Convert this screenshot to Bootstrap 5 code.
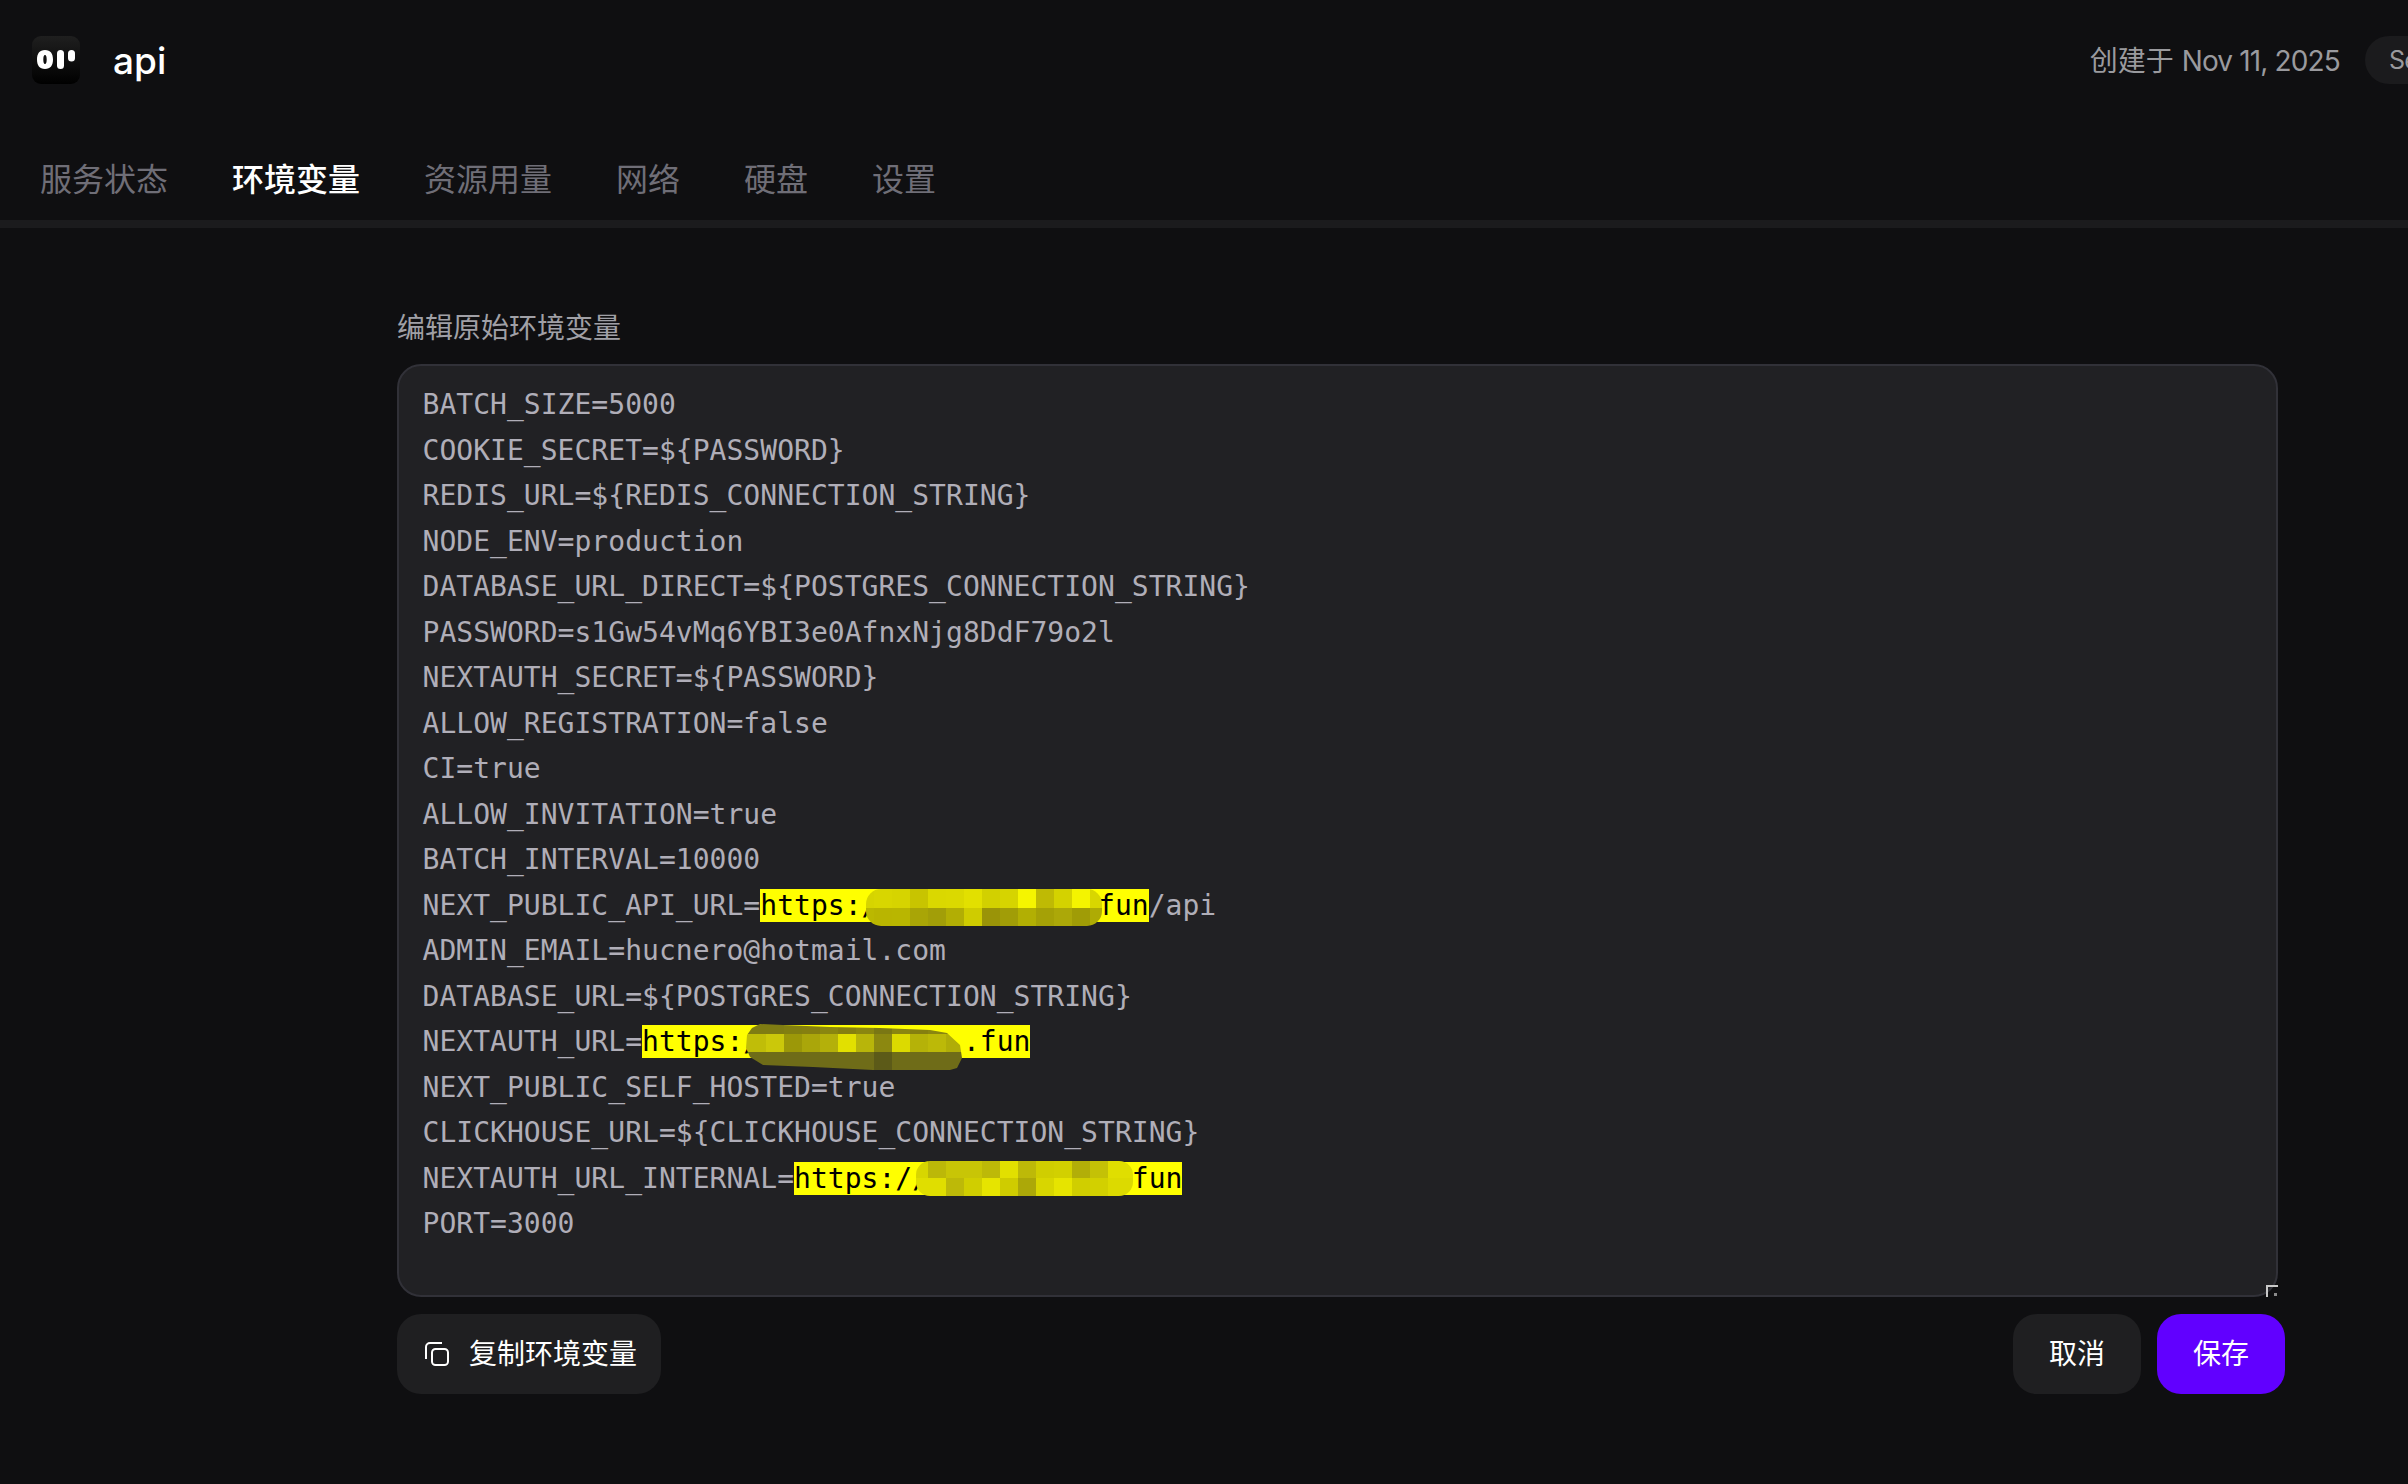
<!doctype html>
<html lang="zh"><head><meta charset="utf-8">
<link href="https://cdn.jsdelivr.net/npm/bootstrap@5.3.0/dist/css/bootstrap.min.css" rel="stylesheet">
<style>
html,body{background:#0f0f11;height:1484px;overflow:hidden}
body{font-family:"Inter","Noto Sans CJK SC",sans-serif;color:#fff}
.top-bar{height:120px;padding:36px 0 0 32px}
.logo-box{width:48px;height:48px;border-radius:9px;background:linear-gradient(#1f1f1f,#000)}
.app-name{font-size:37px;line-height:50px;margin-left:33px;font-weight:500}
.created{font-size:28px;line-height:50px;color:#9a9a9e;margin-right:25px}
.created span{letter-spacing:-.85px}
.chip{width:200px;height:48px;border-radius:24px 0 0 24px;background:#1b1b1d;color:#9a9a9e;font-size:25px;line-height:48px;padding-left:24px;margin-right:-157px;flex:none;letter-spacing:-.8px}
.tabbar{height:108px;padding-left:40px;gap:64px;border-bottom:8px solid #1b1b1d}
.tab-item{font-size:32px;line-height:48px;margin-top:36px;color:#6f6e77;padding:0;height:48px}
.tab-item.on{color:#fff;font-weight:500}
.pane{padding:0 123px 0 397px}
.field-label{font-size:28px;line-height:40px;color:#a0a0a6;margin:80px 0 16px}
.env-box{width:1881px;height:933px;background:#212124;border:2.5px solid #313138;border-radius:24px;padding:16px 24px 0 23.5px;position:relative;font-family:"DejaVu Sans Mono",monospace;font-size:28px;line-height:45.5px;letter-spacing:.03px;color:#b0aeb8;white-space:pre}
.hl{background:#ff0;color:#000;position:relative;display:inline-block;line-height:33px;height:33px}
.patch-a,.patch-b,.patch-c{position:absolute;display:block}
.patch-a{left:106px;top:0}
.patch-b{left:104px;top:-1px}
.patch-c{left:122px;top:-1px}
.grip{position:absolute;right:-1.5px;bottom:-1.5px;width:12px;height:12px;border-left:2px solid #c8c8c8;border-top:2px solid #c8c8c8}
.grip::after{content:"";position:absolute;right:1px;bottom:1px;width:3px;height:3px;background:#8a8a8a}
.act-row{margin-top:17px}
.act-btn{height:80px;border-radius:24px;background:#1f1f21;color:#fff;font-size:28px;border:0;padding:0 24px 0 28px;display:inline-flex;align-items:center;gap:20px}
.act-btn.wide{width:128px;justify-content:center;padding:0}
.act-btn.go{background:#6100ff}
.act-btn svg{width:24px;height:24px;flex:none}
</style></head><body>
<div class="top-bar d-flex align-items-start justify-content-between overflow-hidden">
 <div class="d-flex">
  <div class="logo-box d-flex align-items-center justify-content-center">
   <svg width="48" height="48" viewBox="0 0 48 48" fill="#fff"><path fill-rule="evenodd" d="M13 14c5.500 0 8 3.800 8 9.500S18.500 33 13 33s-8-3.800-8-9.500S7.500 14 13 14zm0 5c-1.200 0-1.700 2-1.700 4.500S11.800 28 13 28s1.700-2 1.700-4.500S14.200 19 13 19z"/><rect x="25" y="14" width="7" height="19" rx="3.500"/><rect x="36" y="14" width="7" height="11.500" rx="3.500"/></svg>
  </div>
  <div class="app-name">api</div>
 </div>
 <div class="d-flex">
  <div class="created">创建于 <span>Nov 11, 2025</span></div>
  <div class="chip">Self-hosted</div>
 </div>
</div>
<div class="tabbar d-flex">
 <a class="tab-item text-decoration-none">服务状态</a>
 <a class="tab-item on text-decoration-none">环境变量</a>
 <a class="tab-item text-decoration-none">资源用量</a>
 <a class="tab-item text-decoration-none">网络</a>
 <a class="tab-item text-decoration-none">硬盘</a>
 <a class="tab-item text-decoration-none">设置</a>
</div>
<div class="pane">
 <div class="field-label">编辑原始环境变量</div>
 <div class="env-box">BATCH_SIZE=5000
COOKIE_SECRET=${PASSWORD}
REDIS_URL=${REDIS_CONNECTION_STRING}
NODE_ENV=production
DATABASE_URL_DIRECT=${POSTGRES_CONNECTION_STRING}
PASSWORD=s1Gw54vMq6YBI3e0AfnxNjg8DdF79o2l
NEXTAUTH_SECRET=${PASSWORD}
ALLOW_REGISTRATION=false
CI=true
ALLOW_INVITATION=true
BATCH_INTERVAL=10000
NEXT_PUBLIC_API_URL=<span class="hl">https://           .fun<svg class="patch-a" width="236" height="37"><defs><clipPath id="ca"><rect width="236" height="37" rx="15"/></clipPath></defs><g clip-path="url(#ca)"><g><rect x="0" width="8" height="19" fill="#d6d400"/><rect x="8" width="18" height="19" fill="#d8d600"/><rect x="26" width="18" height="19" fill="#d6d400"/><rect x="44" width="18" height="19" fill="#c8c400"/><rect x="62" width="18" height="19" fill="#dad800"/><rect x="80" width="18" height="19" fill="#dbd900"/><rect x="98" width="18" height="19" fill="#e2e000"/><rect x="116" width="18" height="19" fill="#d2d000"/><rect x="134" width="18" height="19" fill="#d6d400"/><rect x="152" width="18" height="19" fill="#f5f500"/><rect x="170" width="18" height="19" fill="#bfba04"/><rect x="188" width="18" height="19" fill="#d4d200"/><rect x="206" width="18" height="19" fill="#f4f400"/><rect x="224" width="12" height="19" fill="#d8d600"/></g><g transform="translate(0 19)"><rect x="0" width="8" height="18" fill="#bbb800"/><rect x="8" width="18" height="18" fill="#b9b500"/><rect x="26" width="18" height="18" fill="#b9b600"/><rect x="44" width="18" height="18" fill="#a9a506"/><rect x="62" width="18" height="18" fill="#a29e08"/><rect x="80" width="18" height="18" fill="#b2ae04"/><rect x="98" width="18" height="18" fill="#cfcc00"/><rect x="116" width="18" height="18" fill="#9a9408"/><rect x="134" width="18" height="18" fill="#a19d07"/><rect x="152" width="18" height="18" fill="#b2af03"/><rect x="170" width="18" height="18" fill="#a5a106"/><rect x="188" width="18" height="18" fill="#aca808"/><rect x="206" width="18" height="18" fill="#a09c06"/><rect x="224" width="12" height="18" fill="#aeab04"/></g></g></svg></span>/api
ADMIN_EMAIL=hucnero@hotmail.com
DATABASE_URL=${POSTGRES_CONNECTION_STRING}
NEXTAUTH_URL=<span class="hl">https://           .fun<svg class="patch-b" width="216" height="46"><defs><clipPath id="cb"><path d="M14 0L37 1L84 3L134 4L184 6L201 9L214 21L216 34L211 44L204 46L127 46L67 43L17 41L4 33L0 24L1 11L6 4Z"/></clipPath></defs><g clip-path="url(#cb)"><g><rect x="0" width="20" height="10" fill="#7f7c12"/><rect x="20" width="18" height="10" fill="#7f7c12"/><rect x="38" width="18" height="10" fill="#827f10"/><rect x="56" width="18" height="10" fill="#857f10"/><rect x="74" width="18" height="10" fill="#8a8610"/><rect x="92" width="18" height="10" fill="#857f10"/><rect x="110" width="18" height="10" fill="#8a8610"/><rect x="128" width="18" height="10" fill="#7a7714"/><rect x="146" width="18" height="10" fill="#8a8610"/><rect x="164" width="18" height="10" fill="#857f10"/><rect x="182" width="18" height="10" fill="#8a8610"/><rect x="200" width="16" height="10" fill="#8a8610"/></g><g transform="translate(0 10)"><rect x="0" width="20" height="18" fill="#c0bd08"/><rect x="20" width="18" height="18" fill="#cbc80a"/><rect x="38" width="18" height="18" fill="#9c9808"/><rect x="56" width="18" height="18" fill="#aaa60a"/><rect x="74" width="18" height="18" fill="#b4b00a"/><rect x="92" width="18" height="18" fill="#e2e000"/><rect x="110" width="18" height="18" fill="#b8b50a"/><rect x="128" width="18" height="18" fill="#8c8810"/><rect x="146" width="18" height="18" fill="#dcda00"/><rect x="164" width="18" height="18" fill="#b5b208"/><rect x="182" width="18" height="18" fill="#bcb908"/><rect x="200" width="16" height="18" fill="#b0ad08"/></g><g transform="translate(0 28)"><rect x="0" width="128" height="18" fill="#6f6c18"/><rect x="128" width="18" height="18" fill="#5c5a18"/><rect x="146" width="70" height="18" fill="#6f6c18"/></g></g></svg></span>
NEXT_PUBLIC_SELF_HOSTED=true
CLICKHOUSE_URL=${CLICKHOUSE_CONNECTION_STRING}
NEXTAUTH_URL_INTERNAL=<span class="hl">https://           .fun<svg class="patch-c" width="217" height="35"><defs><clipPath id="cc"><rect width="217" height="35" rx="14"/></clipPath></defs><g clip-path="url(#cc)"><g><rect x="0" width="12" height="17" fill="#d8d600"/><rect x="12" width="18" height="17" fill="#bcb808"/><rect x="30" width="18" height="17" fill="#c8c506"/><rect x="48" width="18" height="17" fill="#c8c506"/><rect x="66" width="18" height="17" fill="#bdb908"/><rect x="84" width="18" height="17" fill="#e2e000"/><rect x="102" width="18" height="17" fill="#bdb908"/><rect x="120" width="18" height="17" fill="#d0ce00"/><rect x="138" width="18" height="17" fill="#d2d000"/><rect x="156" width="18" height="17" fill="#b2ae08"/><rect x="174" width="18" height="17" fill="#c4c106"/><rect x="192" width="25" height="17" fill="#e0de00"/></g><g transform="translate(0 17)"><rect x="0" width="30" height="18" fill="#e0de00"/><rect x="30" width="18" height="18" fill="#bdb908"/><rect x="48" width="18" height="18" fill="#d0ce00"/><rect x="66" width="18" height="18" fill="#e6e400"/><rect x="84" width="18" height="18" fill="#cfcc00"/><rect x="102" width="18" height="18" fill="#aca808"/><rect x="120" width="18" height="18" fill="#d8d600"/><rect x="138" width="18" height="18" fill="#e6e400"/><rect x="156" width="18" height="18" fill="#d0ce00"/><rect x="174" width="18" height="18" fill="#d2d000"/><rect x="192" width="25" height="18" fill="#dcda00"/></g></g></svg></span>
PORT=3000
<span class="grip"></span></div>
 <div class="act-row d-flex justify-content-between">
  <button class="act-btn" type="button"><svg viewBox="0 0 24 24" fill="none" stroke="#fff" stroke-width="2"><rect x="7" y="7" width="16" height="16" rx="3.500"/><path d="M1 17V5a4 4 0 0 1 4-4h12"/></svg>复制环境变量</button>
  <div class="d-flex gap-3">
   <button class="act-btn wide" type="button">取消</button>
   <button class="act-btn wide go" type="button">保存</button>
  </div>
 </div>
</div>
</body></html>
